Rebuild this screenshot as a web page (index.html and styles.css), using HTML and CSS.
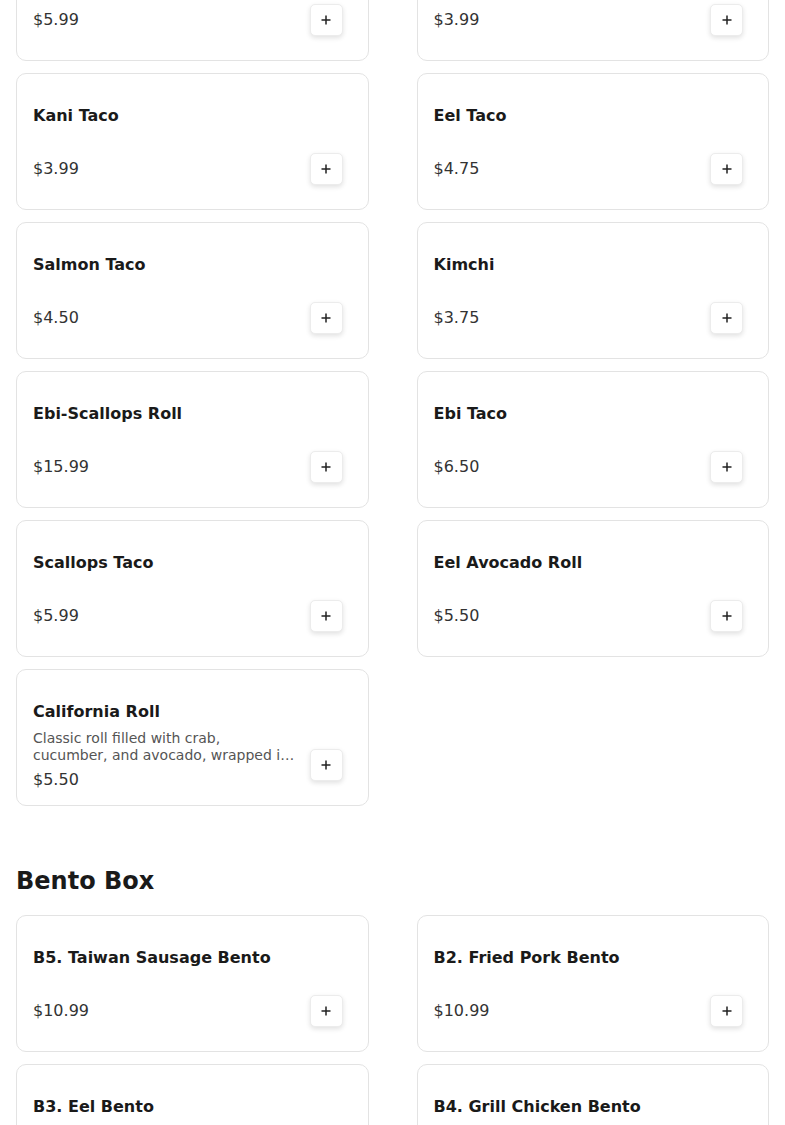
FILE: index.html
```html
<!DOCTYPE html>
<html>
<head>
<meta charset="utf-8">
<link rel="stylesheet" href="styles.css">
</head>
<body>
<main class="menu">
  <section class="section">
    <div class="grid">
      <div class="card"><div class="info"><div class="name">Tuna Taco</div><div class="price">$5.99</div></div><button class="add"><svg viewBox="0 0 12 12" width="12" height="12"><path d="M6 1.5v9M1.5 6h9" stroke="#222" stroke-width="1.5" fill="none"/></svg></button></div>
      <div class="card"><div class="info"><div class="name">Crab Taco</div><div class="price">$3.99</div></div><button class="add"><svg viewBox="0 0 12 12" width="12" height="12"><path d="M6 1.5v9M1.5 6h9" stroke="#222" stroke-width="1.5" fill="none"/></svg></button></div>
      <div class="card"><div class="info"><div class="name">Kani Taco</div><div class="price">$3.99</div></div><button class="add"><svg viewBox="0 0 12 12" width="12" height="12"><path d="M6 1.5v9M1.5 6h9" stroke="#222" stroke-width="1.5" fill="none"/></svg></button></div>
      <div class="card"><div class="info"><div class="name">Eel Taco</div><div class="price">$4.75</div></div><button class="add"><svg viewBox="0 0 12 12" width="12" height="12"><path d="M6 1.5v9M1.5 6h9" stroke="#222" stroke-width="1.5" fill="none"/></svg></button></div>
      <div class="card"><div class="info"><div class="name">Salmon Taco</div><div class="price">$4.50</div></div><button class="add"><svg viewBox="0 0 12 12" width="12" height="12"><path d="M6 1.5v9M1.5 6h9" stroke="#222" stroke-width="1.5" fill="none"/></svg></button></div>
      <div class="card"><div class="info"><div class="name">Kimchi</div><div class="price">$3.75</div></div><button class="add"><svg viewBox="0 0 12 12" width="12" height="12"><path d="M6 1.5v9M1.5 6h9" stroke="#222" stroke-width="1.5" fill="none"/></svg></button></div>
      <div class="card"><div class="info"><div class="name">Ebi-Scallops Roll</div><div class="price">$15.99</div></div><button class="add"><svg viewBox="0 0 12 12" width="12" height="12"><path d="M6 1.5v9M1.5 6h9" stroke="#222" stroke-width="1.5" fill="none"/></svg></button></div>
      <div class="card"><div class="info"><div class="name">Ebi Taco</div><div class="price">$6.50</div></div><button class="add"><svg viewBox="0 0 12 12" width="12" height="12"><path d="M6 1.5v9M1.5 6h9" stroke="#222" stroke-width="1.5" fill="none"/></svg></button></div>
      <div class="card"><div class="info"><div class="name">Scallops Taco</div><div class="price">$5.99</div></div><button class="add"><svg viewBox="0 0 12 12" width="12" height="12"><path d="M6 1.5v9M1.5 6h9" stroke="#222" stroke-width="1.5" fill="none"/></svg></button></div>
      <div class="card"><div class="info"><div class="name">Eel Avocado Roll</div><div class="price">$5.50</div></div><button class="add"><svg viewBox="0 0 12 12" width="12" height="12"><path d="M6 1.5v9M1.5 6h9" stroke="#222" stroke-width="1.5" fill="none"/></svg></button></div>
      <div class="card"><div class="info"><div class="name">California Roll</div><div class="desc">Classic roll filled with crab, cucumber, and avocado, wrapped in seaweed and rice.</div><div class="price">$5.50</div></div><button class="add"><svg viewBox="0 0 12 12" width="12" height="12"><path d="M6 1.5v9M1.5 6h9" stroke="#222" stroke-width="1.5" fill="none"/></svg></button></div>
    </div>
  </section>
  <section class="section">
    <h2 class="heading">Bento Box</h2>
    <div class="grid">
      <div class="card"><div class="info"><div class="name">B5. Taiwan Sausage Bento</div><div class="price">$10.99</div></div><button class="add"><svg viewBox="0 0 12 12" width="12" height="12"><path d="M6 1.5v9M1.5 6h9" stroke="#222" stroke-width="1.5" fill="none"/></svg></button></div>
      <div class="card"><div class="info"><div class="name">B2. Fried Pork Bento</div><div class="price">$10.99</div></div><button class="add"><svg viewBox="0 0 12 12" width="12" height="12"><path d="M6 1.5v9M1.5 6h9" stroke="#222" stroke-width="1.5" fill="none"/></svg></button></div>
      <div class="card"><div class="info"><div class="name">B3. Eel Bento</div><div class="price">$12.99</div></div><button class="add"><svg viewBox="0 0 12 12" width="12" height="12"><path d="M6 1.5v9M1.5 6h9" stroke="#222" stroke-width="1.5" fill="none"/></svg></button></div>
      <div class="card"><div class="info"><div class="name">B4. Grill Chicken Bento</div><div class="price">$10.99</div></div><button class="add"><svg viewBox="0 0 12 12" width="12" height="12"><path d="M6 1.5v9M1.5 6h9" stroke="#222" stroke-width="1.5" fill="none"/></svg></button></div>
    </div>
  </section>
</main>
</body>
</html>
```

FILE: styles.css
```css
html, body {
  margin: 0;
  padding: 0;
  background: #fff;
  font-family: "DejaVu Sans", sans-serif;
  color: #1a1a1a;
  overflow: hidden;
}

.menu {
  padding: 0 16px;
  margin-top: -76px;
}

.section {
  margin-bottom: 59px;
}

.heading {
  margin: 0 0 18px;
  font-size: 24px;
  line-height: 32px;
  font-weight: bold;
  color: #1a1a1a;
}

.grid {
  display: grid;
  grid-template-columns: 1fr 1fr;
  column-gap: 48px;
  row-gap: 12px;
}

.card {
  box-sizing: border-box;
  height: 137px;
  border: 1px solid #e3e3e3;
  border-radius: 10px;
  background: #fff;
  display: flex;
  align-items: flex-end;
  padding: 0 25px 24px 16px;
  gap: 12px;
}

.info {
  flex: 1;
  min-width: 0;
  align-self: flex-start;
  padding-top: 30px;
  display: flex;
  flex-direction: column;
}

.name {
  font-size: 16px;
  line-height: 24px;
  font-weight: bold;
  color: #1a1a1a;
}

.price {
  font-size: 16px;
  line-height: 24px;
  color: #333;
  margin-top: 29px;
}

.desc {
  font-size: 14px;
  line-height: 17px;
  color: #555;
  margin-top: 6px;
  display: -webkit-box;
  -webkit-line-clamp: 2;
  -webkit-box-orient: vertical;
  overflow: hidden;
}

.desc + .price {
  margin-top: 4px;
}

.add {
  box-sizing: border-box;
  width: 33px;
  height: 32px;
  flex: none;
  border: 1px solid #ececec;
  border-radius: 5px;
  background: #fff;
  box-shadow: 0 2px 5px rgba(0, 0, 0, 0.12);
  display: flex;
  align-items: center;
  justify-content: center;
  padding: 0;
}

.add svg {
  display: block;
}
```
